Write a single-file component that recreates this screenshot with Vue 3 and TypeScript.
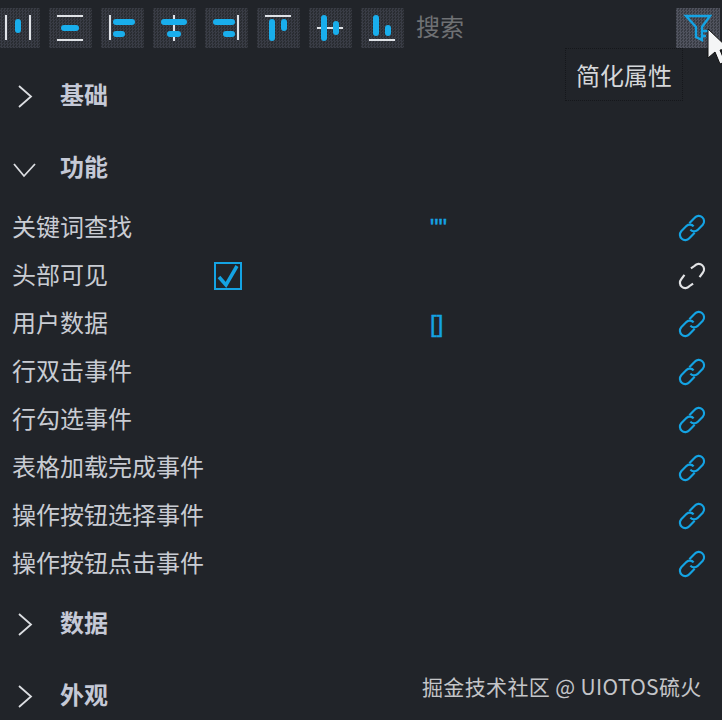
<script setup lang="ts">
interface Row {
  label: string
  value?: string
  checked?: boolean
  linked: boolean
}

const alignIcons = [
  { lines: ['M9 7V32', 'M33 7V32'], bars: [[21, 14, 21, 22]] },
  { lines: ['M8 8H34', 'M8 32H34'], bars: [[15, 20, 27, 20]] },
  { lines: ['M9 7V32'], bars: [[15, 14, 31, 14], [15, 26, 21, 26]] },
  { lines: ['M21 7V33'], bars: [[11, 14, 31, 14], [17, 26, 25, 26]] },
  { lines: ['M33 7V32'], bars: [[11, 14, 27, 14], [21, 26, 27, 26]] },
  { lines: ['M8 8H34'], bars: [[15, 14, 15, 30], [27, 14, 27, 20]] },
  { lines: ['M8 20H34'], bars: [[15, 10, 15, 30], [27, 16, 27, 24]] },
  { lines: ['M8 32H34'], bars: [[15, 10, 15, 25], [27, 20, 27, 25]] }
]

const rows: Row[] = [
  { label: '关键词查找', value: '""', linked: true },
  { label: '头部可见', checked: true, linked: false },
  { label: '用户数据', value: '[]', linked: true },
  { label: '行双击事件', linked: true },
  { label: '行勾选事件', linked: true },
  { label: '表格加载完成事件', linked: true },
  { label: '操作按钮选择事件', linked: true },
  { label: '操作按钮点击事件', linked: true }
]
</script>

<template>
  <div class="panel">
    <div class="toolbar">
      <button v-for="(icon, i) in alignIcons" :key="i" class="tool">
        <svg width="43" height="40" viewBox="0 0 43 40">
          <path v-for="d in icon.lines" :key="d" :d="d" class="tool-line" />
          <line
            v-for="(b, j) in icon.bars"
            :key="j"
            :x1="b[0]"
            :y1="b[1]"
            :x2="b[2]"
            :y2="b[3]"
            class="tool-bar"
          />
        </svg>
      </button>
      <span class="search">搜索</span>
      <button class="tool filter">
        <svg width="44" height="40" viewBox="0 0 44 40">
          <path d="M10 8H34L26 19V32L20 29V19Z M26 23H32 M26 28H30" class="filter-icon" />
        </svg>
      </button>
    </div>

    <div class="tooltip">简化属性</div>
    <svg class="cursor" width="16" height="38" viewBox="0 0 16 38">
      <path d="M1 1L1 30L8 24L13 36L18 34L13 22L22 21Z" fill="#f4f5f6" stroke="#111" stroke-width="1" />
    </svg>

    <section class="group">
      <div class="group-head">
        <svg class="arrow" width="20" height="24" viewBox="0 0 20 24"><path d="M4 2L16 12.5L4 23" /></svg>
        <span>基础</span>
      </div>
    </section>

    <section class="group">
      <div class="group-head open">
        <svg class="arrow" width="26" height="16" viewBox="0 0 26 16"><path d="M3 2L13 14L24 2" /></svg>
        <span>功能</span>
      </div>
      <div class="rows">
        <div v-for="row in rows" :key="row.label" class="row">
          <span class="label">{{ row.label }}</span>
          <span class="control">
            <span v-if="row.checked" class="check">
              <svg width="24" height="24" viewBox="0 0 24 24"><path d="M3 13L10 21L21 2" /></svg>
            </span>
          </span>
          <span class="value">{{ row.value }}</span>
          <svg class="link" :class="{ off: !row.linked }" width="28" height="28" viewBox="1 1 26 26">
            <template v-if="row.linked">
              <path d="M11.5 9.5L16.5 4.5A4.6 4.6 0 0 1 24 11L19 16A4.6 4.6 0 0 1 12.5 15.5" />
              <path d="M16.5 18.5L11.5 23.5A4.6 4.6 0 0 1 4 17L9 12A4.6 4.6 0 0 1 15.5 12.5" />
            </template>
            <template v-else>
              <path d="M13 7L16.5 4.5A4.6 4.6 0 0 1 24 11L21 15" />
              <path d="M15 21L11.5 23.5A4.6 4.6 0 0 1 4 17L7 13" />
            </template>
          </svg>
        </div>
      </div>
    </section>

    <section class="group">
      <div class="group-head">
        <svg class="arrow" width="20" height="24" viewBox="0 0 20 24"><path d="M4 2L16 12.5L4 23" /></svg>
        <span>数据</span>
      </div>
    </section>

    <section class="group">
      <div class="group-head">
        <svg class="arrow" width="20" height="24" viewBox="0 0 20 24"><path d="M4 2L16 12.5L4 23" /></svg>
        <span>外观</span>
      </div>
    </section>

    <div class="watermark">掘金技术社区 @ UIOTOS硫火</div>
  </div>
</template>

<style scoped>
.panel {
  position: relative;
  width: 722px;
  height: 720px;
  overflow: hidden;
  background: #212429;
  color: #c9ccd3;
  font-family: "Noto Sans CJK SC", "Noto Sans", sans-serif;
  font-size: 24px;
}

.toolbar {
  display: flex;
  align-items: center;
  gap: 9px;
  height: 40px;
  padding-top: 8px;
  margin-left: -3px;
}

.tool {
  flex: none;
  width: 43px;
  height: 40px;
  padding: 0;
  border: none;
  display: block;
  background: repeating-conic-gradient(#393c45 0 25%, #292c31 0 50%) 0 0 / 3px 3px;
}

.tool svg {
  display: block;
}

.tool-line {
  stroke: #dfe2e6;
  stroke-width: 2;
  fill: none;
}

.tool-bar {
  stroke: #19aeec;
  stroke-width: 6;
  stroke-linecap: round;
}

.search {
  margin-left: 3px;
  margin-top: -5px;
  color: #6f7174;
}

.filter {
  width: 44px;
  margin-left: auto;
  margin-right: 2px;
  background: repeating-conic-gradient(#50535e 0 25%, #383b43 0 50%) 0 0 / 3px 3px;
}

.filter-icon {
  fill: none;
  stroke: #14a3e3;
  stroke-width: 2.4;
}

.tooltip {
  position: absolute;
  left: 565px;
  top: 48px;
  width: 118px;
  height: 53px;
  box-sizing: border-box;
  padding-left: 10px;
  line-height: 52px;
  color: #d5d7da;
  border: 1px dotted #15171b;
}

.cursor {
  position: absolute;
  left: 707px;
  top: 28px;
}

.group {
  margin-top: 24px;
}

.group-head {
  position: relative;
  display: flex;
  align-items: center;
  box-sizing: border-box;
  height: 48px;
  padding-left: 60px;
  padding-bottom: 6px;
  font-weight: 700;
  color: #c5c9d6;
}

.arrow {
  position: absolute;
  left: 15px;
  top: 12px;
  fill: none;
  stroke: #dcdee2;
  stroke-width: 1.8;
}

.open .arrow {
  left: 11px;
  top: 18px;
}

.rows {
  margin-top: 12px;
  margin-bottom: -12px;
}

.row {
  display: flex;
  align-items: center;
  height: 48px;
  padding-left: 12px;
}

.label {
  width: 202px;
  flex: none;
  margin-top: -5px;
}

.control {
  width: 216px;
  flex: none;
  display: flex;
}

.check {
  box-sizing: border-box;
  width: 28px;
  height: 28px;
  border: 2px solid #14a3e3;
  display: block;
}

.check svg {
  display: block;
  fill: none;
  stroke: #14a3e3;
  stroke-width: 3.5;
}

.value {
  flex: 1;
  color: #14a3e3;
  font-size: 24px;
  line-height: 28px;
  font-family: "Liberation Sans", sans-serif;
  -webkit-text-stroke: 0.4px #14a3e3;
}

.link {
  flex: none;
  margin-right: 16px;
  fill: none;
  stroke: #14a3e3;
  stroke-width: 2;
}

.link.off {
  stroke: #e2e3e5;
}

.watermark {
  position: absolute;
  left: 422px;
  top: 671px;
  font-size: 21px;
  line-height: 30px;
  letter-spacing: 0.35px;
  white-space: nowrap;
  color: #c4c5c8;
}
</style>
